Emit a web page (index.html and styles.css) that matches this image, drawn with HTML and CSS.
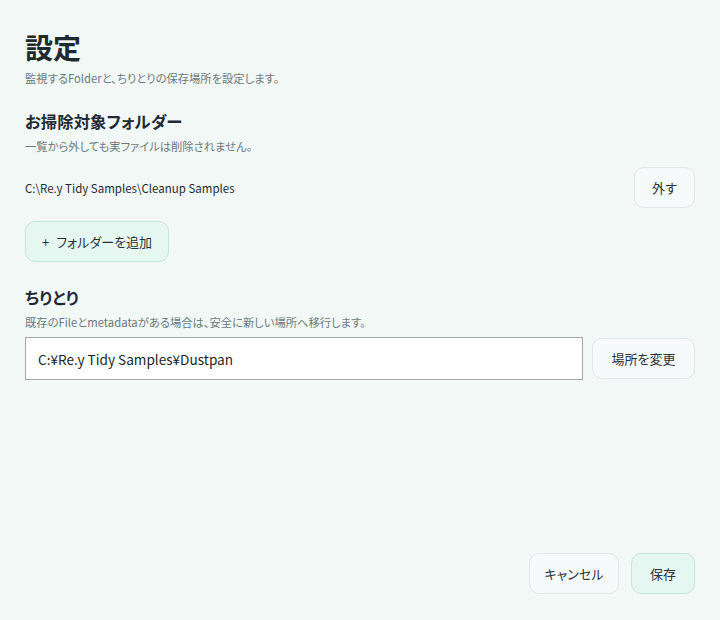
FILE: index.html
```html
<!DOCTYPE html>
<html lang="ja">
<head>
<meta charset="utf-8">
<link rel="stylesheet" href="styles.css">
</head>
<body>
<div class="page">
  <header class="head">
    <h1 class="title">設定</h1>
    <p class="desc">監視するFolderと、ちりとりの保存場所を設定します。</p>
  </header>

  <section class="section">
    <h2 class="sec-title">お掃除対象フォルダー</h2>
    <p class="desc">一覧から外しても実ファイルは削除されません。</p>
    <div class="folder-row">
      <span class="path">C:\Re.y Tidy Samples\Cleanup Samples</span>
      <button class="btn btn-light btn-remove">外す</button>
    </div>
    <div class="add-row">
      <button class="btn btn-accent btn-add"><span class="plus">+</span>フォルダーを追加</button>
    </div>
  </section>

  <section class="section section-2">
    <h2 class="sec-title">ちりとり</h2>
    <p class="desc">既存のFileとmetadataがある場合は、安全に新しい場所へ移行します。</p>
    <div class="input-row">
      <input class="path-input" type="text" value="C:¥Re.y Tidy Samples¥Dustpan">
      <button class="btn btn-light btn-change">場所を変更</button>
    </div>
  </section>

  <footer class="foot">
    <button class="btn btn-light btn-cancel">キャンセル</button>
    <button class="btn btn-accent btn-save">保存</button>
  </footer>
</div>
</body>
</html>
```

FILE: styles.css
```css
html, body {
  margin: 0;
  padding: 0;
  height: 100%;
}
body {
  background: #f1f8f6;
  font-family: "Noto Sans CJK JP", "Noto Sans", sans-serif;
  font-feature-settings: "palt";
  color: #1f2a2e;
}
.page {
  box-sizing: border-box;
  height: 620px;
  padding: 28px 25px 26px 25px;
  display: flex;
  flex-direction: column;
}
.title {
  margin: 0;
  font-size: 28px;
  font-weight: 700;
  line-height: 38px;
  color: #1f2a2e;
}
.desc {
  margin: 0;
  font-size: 11.3px;
  line-height: 18px;
  color: #6c7a7d;
}
.head .desc {
  margin-top: 3px;
}
.section {
  margin-top: 22px;
}
.sec-title {
  margin: 0;
  font-size: 16.4px;
  font-weight: 700;
  line-height: 24px;
  color: #1f2a35;
}
.section .desc {
  margin-top: 4px;
}
.folder-row {
  margin-top: 12px;
  display: flex;
  align-items: center;
  justify-content: space-between;
}
.path {
  font-size: 11.5px;
  color: #1f2a2e;
}
.btn {
  box-sizing: border-box;
  font-family: inherit;
  font-feature-settings: "palt";
  font-size: 13px;
  color: #2a3338;
  height: 41px;
  border-radius: 10px;
  padding: 0;
  cursor: pointer;
}
.btn-light {
  background: #f7fafa;
  border: 1px solid #e1e8e7;
}
.btn-accent {
  background: #e6f7f2;
  border: 1px solid #c6e6dc;
}
.btn-remove {
  width: 61px;
}
.add-row {
  margin-top: 13px;
  display: flex;
}
.btn-add {
  width: 144px;
}
.plus {
  margin-right: 7px;
}
.section-2 {
  margin-top: 23px;
}
.input-row {
  margin-top: 6px;
  display: flex;
  align-items: center;
  gap: 9px;
}
.path-input {
  flex: 1;
  box-sizing: border-box;
  height: 43px;
  border: 1px solid #a5a9aa;
  background: #ffffff;
  font-family: inherit;
  font-size: 13.6px;
  color: #1b1f22;
  padding: 0 12px;
  outline: none;
}
.btn-change {
  width: 103px;
}
.foot {
  margin-top: auto;
  display: flex;
  justify-content: flex-end;
  gap: 12px;
}
.btn-cancel {
  width: 90px;
}
.btn-save {
  width: 64px;
}
```
